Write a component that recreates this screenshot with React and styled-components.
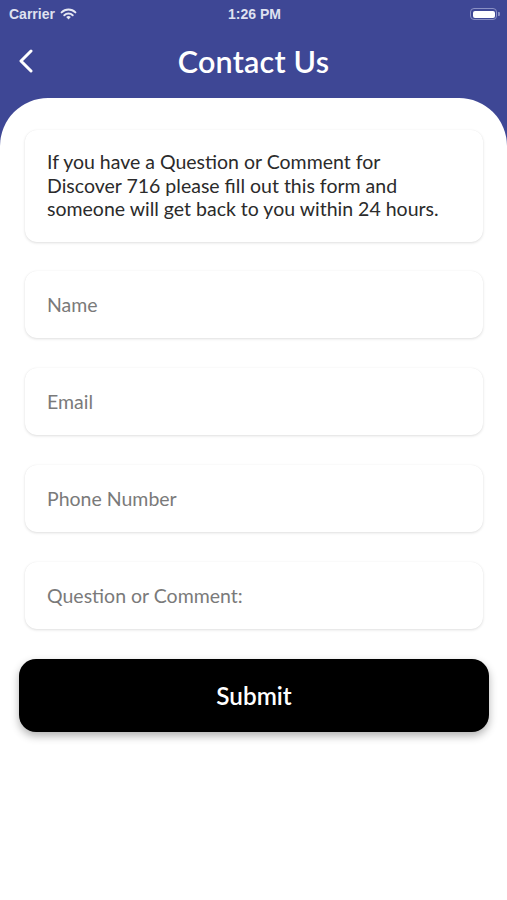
import styled, { createGlobalStyle } from 'styled-components';

const GlobalStyle = createGlobalStyle`
  html, body {
    margin: 0;
    padding: 0;
    background: #3e4795;
  }
  * {
    box-sizing: border-box;
  }
`

const Screen = styled.div`
  width: 507px;
  height: 900px;
  background-color: #3e4795;
  display: flex;
  flex-direction: column;
  font-family: Lato, 'Open Sans', sans-serif;
  overflow: hidden;
`

const StatusBar = styled.div`
  height: 28px;
  padding: 0 7px 0 9px;
  display: grid;
  grid-template-columns: 1fr auto 1fr;
  align-items: center;
  color: #dfe1f0;
  font-family: 'Liberation Sans', Arial, sans-serif;
  font-size: 14px;
  font-weight: 600;
`

const Carrier = styled.div`
  display: flex;
  align-items: center;
  gap: 5px;
`

const Battery = styled.div`
  justify-self: end;
  display: flex;
  align-items: center;
  gap: 1px;
`

const BatteryBody = styled.div`
  width: 27px;
  height: 12px;
  border: 1.5px solid #8a90c4;
  border-radius: 4px;
  padding: 1.5px;

  &::after {
    content: '';
    display: block;
    width: 100%;
    height: 100%;
    border-radius: 2px;
    background: #ffffff;
  }
`

const BatteryTip = styled.div`
  width: 2px;
  height: 4px;
  border-radius: 0 1px 1px 0;
  background: #8a90c4;
`

const Header = styled.div`
  height: 70px;
  padding-bottom: 4px;
  display: grid;
  grid-template-columns: 60px 1fr 60px;
  align-items: center;
`

const BackButton = styled.button`
  border: none;
  background: none;
  padding: 0 0 0 18px;
  height: 40px;
  display: flex;
  align-items: center;
  cursor: pointer;
`

const Title = styled.h1`
  margin: 0;
  text-align: center;
  color: #ffffff;
  font-size: 30.5px;
  font-weight: 600;
  letter-spacing: 0.2px;
`

const Sheet = styled.div`
  flex: 1;
  background: #ffffff;
  border-radius: 48px 48px 0 0;
  padding: 32px 24px 0 25px;
  display: flex;
  flex-direction: column;
`

const Card = styled.div`
  background: #ffffff;
  border-radius: 12px;
  box-shadow: 0 1px 3px rgba(0, 0, 0, 0.13), 0 0 1px rgba(0, 0, 0, 0.06);
`

const InfoCard = styled(Card)`
  padding: 20px 36px 21px 22px;
  color: #2b2b2b;
  font-size: 19.5px;
  line-height: 23.5px;
  margin-bottom: 29px;
`

const Form = styled.form`
  display: flex;
  flex-direction: column;
  gap: 30px;
`

const FieldCard = styled(Card)`
  height: 67px;
  display: flex;
  align-items: center;
  padding: 0 22px;
`

const Input = styled.input`
  width: 100%;
  border: none;
  outline: none;
  background: transparent;
  font-family: Lato, 'Open Sans', sans-serif;
  font-size: 19.5px;
  color: #333333;
  padding: 0;

  &::placeholder {
    color: #7a7a7a;
  }
`

const SubmitButton = styled.button`
  margin: 0 -6px;
  height: 73px;
  border: none;
  border-radius: 17px;
  background: #000000;
  color: #ffffff;
  font-family: Lato, 'Open Sans', sans-serif;
  font-size: 24.3px;
  font-weight: 600;
  box-shadow: 0 4px 8px rgba(0, 0, 0, 0.3);
  cursor: pointer;
`

const fields = ['Name', 'Email', 'Phone Number', 'Question or Comment:'];

const App = () => {
  return (
    <>
      <GlobalStyle />
      <Screen>
        <StatusBar>
          <Carrier>
            Carrier
            <svg width="17" height="12" viewBox="0 0 17 12">
              <path d="M8.5 11.5 L6.2 9.1 A3.3 3.3 0 0 1 10.8 9.1 Z" fill="#e6e8f3" />
              <path d="M4.3 7.2 A6 6 0 0 1 12.7 7.2" stroke="#e6e8f3" strokeWidth="2" fill="none" strokeLinecap="round" />
              <path d="M1.6 4.4 A9.8 9.8 0 0 1 15.4 4.4" stroke="#e6e8f3" strokeWidth="2" fill="none" strokeLinecap="round" />
            </svg>
          </Carrier>
          <div>1:26 PM</div>
          <Battery>
            <BatteryBody />
            <BatteryTip />
          </Battery>
        </StatusBar>
        <Header>
          <BackButton aria-label="Back">
            <svg width="16" height="24" viewBox="0 0 16 24">
              <path d="M13 2 L3 12 L13 22" stroke="#ffffff" strokeWidth="3" fill="none" strokeLinecap="round" strokeLinejoin="round" />
            </svg>
          </BackButton>
          <Title>Contact Us</Title>
          <div />
        </Header>
        <Sheet>
          <InfoCard>
            If you have a Question or Comment for Discover 716 please fill out this form and someone will get back to you within 24 hours.
          </InfoCard>
          <Form onSubmit={e => e.preventDefault()}>
            {fields.map(f => (
              <FieldCard key={f}>
                <Input placeholder={f} />
              </FieldCard>
            ))}
            <SubmitButton type="submit">Submit</SubmitButton>
          </Form>
        </Sheet>
      </Screen>
    </>
  )
}

export default App;
